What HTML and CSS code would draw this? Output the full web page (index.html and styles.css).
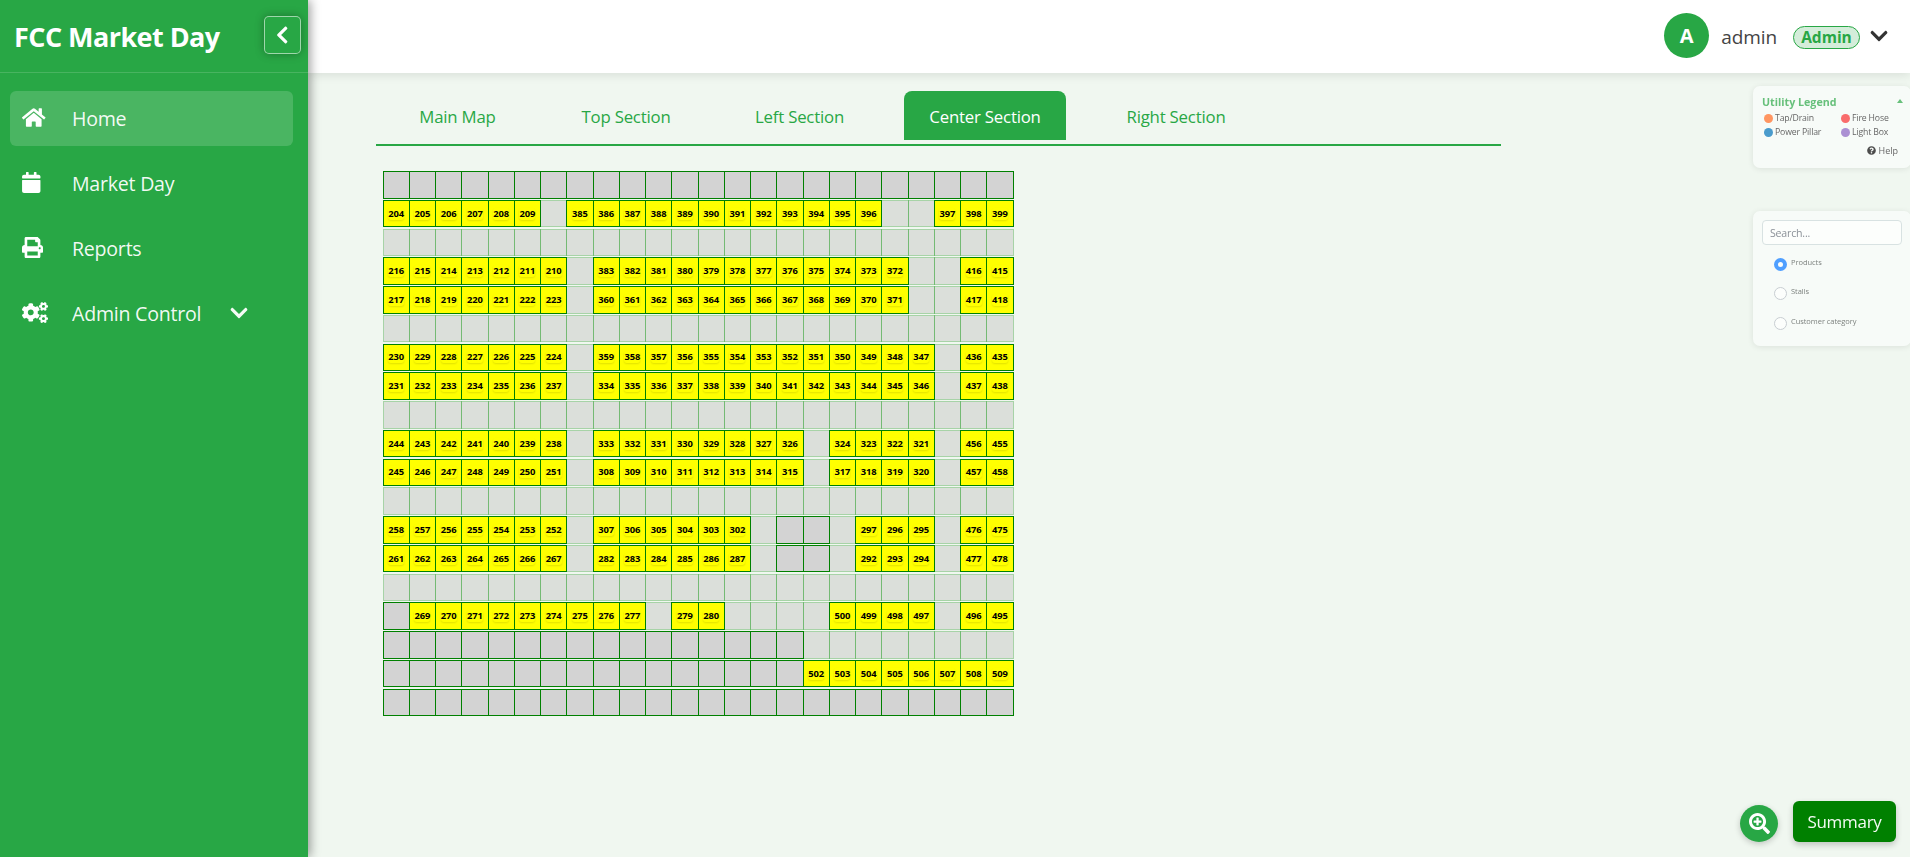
FILE: index.html
```html
<!DOCTYPE html>
<html lang="en">
<head>
<meta charset="utf-8">
<title>FCC Market Day</title>
<link rel="stylesheet" href="styles.css">
</head>
<body>
<svg class="defs" aria-hidden="true">
  <symbol id="down" viewBox="0 0 448 512"><path d="M207.029 381.476L12.686 187.132c-9.373-9.373-9.373-24.569 0-33.941l22.667-22.667c9.357-9.357 24.522-9.375 33.901-.04L224 284.505l154.745-154.021c9.379-9.335 24.544-9.317 33.901.04l22.667 22.667c9.373 9.373 9.373 24.569 0 33.941L240.971 381.476c-9.373 9.372-24.569 9.372-33.942 0z"/></symbol>
  <symbol id="cog-small" viewBox="0 0 640 512"><path fill-rule="evenodd" d="M512.1 191l-8.2 14.3c-3 5.3-9.4 7.5-15.1 5.4-11.8-4.4-22.6-10.7-32.1-18.6-4.6-3.8-5.8-10.5-2.8-15.7l8.2-14.3c-6.9-8-12.3-17.3-15.9-27.4h-16.5c-6 0-11.2-4.3-12.2-10.3-2-12-2.1-24.6 0-37.1 1-6 6.2-10.4 12.2-10.4h16.5c3.6-10.1 9-19.4 15.9-27.4l-8.2-14.3c-3-5.2-1.9-11.9 2.8-15.7 9.5-7.9 20.4-14.2 32.1-18.6 5.7-2.1 12.1.1 15.1 5.4l8.2 14.3c10.5-1.9 21.2-1.9 31.7 0L552 6.3c3-5.3 9.4-7.5 15.1-5.4 11.8 4.4 22.6 10.7 32.1 18.6 4.6 3.8 5.8 10.5 2.8 15.7l-8.2 14.3c6.9 8 12.3 17.3 15.9 27.4h16.5c6 0 11.2 4.3 12.2 10.3 2 12 2.1 24.6 0 37.1-1 6-6.2 10.4-12.2 10.4h-16.5c-3.6 10.1-9 19.4-15.9 27.4l8.2 14.3c3 5.2 1.9 11.9-2.8 15.7-9.5 7.9-20.4 14.2-32.1 18.6-5.7 2.1-12.1-.1-15.1-5.4l-8.2-14.3c-10.4 1.9-21.2 1.9-31.7 0zm-10.5-58.8c38.5 29.6 82.4-14.3 52.8-52.8-38.5-29.7-82.4 14.3-52.8 52.8z"/></symbol>
</svg>

<div class="shell">
  <aside class="sidebar">
    <div class="brand">
      <h1 class="brand-name">FCC Market Day</h1>
      <button class="collapse" aria-label="Collapse"><svg viewBox="0 0 320 512"><path d="M34.52 239.03L228.87 44.69c9.37-9.37 24.57-9.37 33.94 0l22.67 22.67c9.36 9.36 9.37 24.52.04 33.9L131.49 256l154.02 154.75c9.34 9.38 9.32 24.54-.04 33.9l-22.67 22.67c-9.37 9.37-24.57 9.37-33.94 0L34.52 272.97c-9.37-9.37-9.37-24.57 0-33.94z"/></svg></button>
    </div>
    <nav class="menu">
      <a class="menu-item is-active"><span class="menu-icon"><svg class="w-home" viewBox="0 0 576 512"><path d="M280.37 148.26L96 300.11V464a16 16 0 0 0 16 16l112.06-.29a16 16 0 0 0 15.92-16V368a16 16 0 0 1 16-16h64a16 16 0 0 1 16 16v95.64a16 16 0 0 0 16 16.05L464 480a16 16 0 0 0 16-16V300L295.67 148.26a12.19 12.19 0 0 0-15.3 0zM571.6 251.47L488 182.56V44.05a12 12 0 0 0-12-12h-56a12 12 0 0 0-12 12v72.61L318.47 43a48 48 0 0 0-61 0L4.34 251.47a12 12 0 0 0-1.6 16.9l25.5 31A12 12 0 0 0 45.15 301l235.22-193.74a12.19 12.19 0 0 1 15.3 0L530.9 301a12 12 0 0 0 16.9-1.6l25.5-31a12 12 0 0 0-1.7-16.93z"/></svg></span><span>Home</span></a>
      <a class="menu-item"><span class="menu-icon"><svg class="w-cal" viewBox="0 0 448 512"><path d="M12 192h424c6.6 0 12 5.4 12 12v260c0 26.5-21.5 48-48 48H48c-26.5 0-48-21.5-48-48V204c0-6.6 5.4-12 12-12zm436-44v-36c0-26.5-21.5-48-48-48h-48V12c0-6.6-5.4-12-12-12h-40c-6.6 0-12 5.4-12 12v52H160V12c0-6.6-5.4-12-12-12h-40c-6.6 0-12 5.4-12 12v52H48C21.5 64 0 85.5 0 112v36c0 6.6 5.4 12 12 12h424c6.6 0 12-5.4 12-12z"/></svg></span><span>Market Day</span></a>
      <a class="menu-item"><span class="menu-icon"><svg class="w-print" viewBox="0 0 512 512"><path d="M448 192V77.25c0-8.49-3.37-16.62-9.37-22.63L393.37 9.37c-6-6-14.14-9.37-22.63-9.37H96C78.33 0 64 14.33 64 32v160c-35.35 0-64 28.65-64 64v112c0 8.84 7.16 16 16 16h48v96c0 17.67 14.33 32 32 32h320c17.67 0 32-14.33 32-32v-96h48c8.84 0 16-7.16 16-16V256c0-35.35-28.65-64-64-64zm-64 256H128v-96h256v96zm0-224H128V64h192v48c0 8.84 7.16 16 16 16h48v96zm48 72c-13.25 0-24-10.75-24-24 0-13.26 10.75-24 24-24s24 10.74 24 24c0 13.25-10.75 24-24 24z"/></svg></span><span>Reports</span></a>
      <a class="menu-item"><span class="menu-icon"><svg class="w-cogs" viewBox="0 0 640 512"><use href="#cog-small" width="640" height="512"/><use href="#cog-small" y="301" width="640" height="512"/><path fill-rule="evenodd" d="M386.3 286.1l33.7 16.8c10.1 5.8 14.5 18.1 10.5 29.1-8.9 24.2-26.4 46.4-42.6 65.8-7.4 8.9-20.2 11.1-30.3 5.3l-29.1-16.8c-16 13.7-34.6 24.6-54.9 31.7v33.6c0 11.6-8.3 21.6-19.7 23.6-24.6 4.2-50.4 4.4-75.9 0-11.5-2-20-11.9-20-23.6V418c-20.3-7.2-38.9-18-54.9-31.7L74 403c-10 5.8-22.9 3.6-30.3-5.3-16.2-19.4-33.3-41.6-42.2-65.7-4-10.9.4-23.2 10.5-29.1l33.3-16.8c-3.9-20.9-3.9-42.4 0-63.4L12 205.8c-10.1-5.8-14.6-18.1-10.5-29 8.9-24.2 26-46.4 42.2-65.8 7.4-8.9 20.2-11.1 30.3-5.3l29.1 16.8c16-13.7 34.6-24.6 54.9-31.7V57.1c0-11.5 8.2-21.5 19.6-23.5 24.6-4.2 50.5-4.4 76-.1 11.5 2 20 11.9 20 23.6v33.6c20.3 7.2 38.9 18 54.9 31.7l29.1-16.8c10-5.8 22.9-3.6 30.3 5.3 16.2 19.4 33.2 41.6 42.1 65.8 4 10.9.1 23.2-10 29.1l-33.7 16.8c3.9 21 3.9 42.5 0 63.5zm-117.6 21.1c59.2-77-28.7-164.9-105.7-105.7-59.2 77 28.7 164.9 105.7 105.7z"/></svg></span><span>Admin Control</span><svg class="menu-caret" viewBox="0 0 448 512"><use href="#down"/></svg></a>
    </nav>
  </aside>

  <div class="page">
    <header class="topbar">
      <span class="avatar">A</span>
      <span class="user">admin</span>
      <span class="role">Admin</span>
      <svg class="user-caret" viewBox="0 0 448 512"><use href="#down"/></svg>
    </header>
    <main class="content">
      <nav class="tabs">
        <a class="tab t-main">Main Map</a>
        <a class="tab t-top">Top Section</a>
        <a class="tab t-left">Left Section</a>
        <a class="tab t-center is-current">Center Section</a>
        <a class="tab t-right">Right Section</a>
      </nav>
      <div class="map" id="map"></div>
    </main>
  </div>
</div>

<section class="panel legend">
  <div class="legend-head"><span>Utility Legend</span><i class="up"></i></div>
  <div class="legend-grid">
    <span class="key"><i class="dot orange"></i>Tap/Drain</span>
    <span class="key"><i class="dot red"></i>Fire Hose</span>
    <span class="key"><i class="dot blue"></i>Power Pillar</span>
    <span class="key"><i class="dot purple"></i>Light Box</span>
  </div>
  <div class="help"><svg viewBox="0 0 512 512"><path d="M504 256c0 136.997-111.043 248-248 248S8 392.997 8 256C8 119.083 119.043 8 256 8s248 111.083 248 248zM262.655 90c-54.497 0-89.255 22.957-116.549 63.758-3.536 5.286-2.353 12.415 2.715 16.258l34.699 26.31c5.205 3.947 12.621 3.008 16.665-2.122 17.864-22.658 30.113-35.797 57.303-35.797 20.429 0 45.698 13.148 45.698 32.958 0 14.976-12.363 22.667-32.534 33.976C247.128 238.528 216 254.941 216 296v4c0 6.627 5.373 12 12 12h56c6.627 0 12-5.373 12-12v-1.333c0-28.462 83.186-29.647 83.186-106.667 0-58.002-60.165-102-116.531-102zM256 338c-25.365 0-46 20.635-46 46 0 25.364 20.635 46 46 46s46-20.636 46-46c0-25.365-20.635-46-46-46z"/></svg><span>Help</span></div>
</section>

<section class="panel search">
  <div class="search-box">Search...</div>
  <div class="options">
    <label class="option"><i class="radio is-on"></i><span>Products</span></label>
    <label class="option"><i class="radio"></i><span>Stalls</span></label>
    <label class="option"><i class="radio"></i><span>Customer category</span></label>
  </div>
</section>

<div class="actions">
  <button class="zoom" aria-label="Zoom"><svg viewBox="0 0 512 512"><path d="M304 192v32c0 6.6-5.4 12-12 12h-56v56c0 6.6-5.4 12-12 12h-32c-6.6 0-12-5.4-12-12v-56h-56c-6.6 0-12-5.4-12-12v-32c0-6.6 5.4-12 12-12h56v-56c0-6.6 5.4-12 12-12h32c6.6 0 12 5.4 12 12v56h56c6.6 0 12 5.4 12 12zm201 284.7L476.7 505c-9.4 9.4-24.6 9.4-33.9 0L343 405.3c-4.5-4.5-7-10.6-7-17V372c-35.3 27.6-79.7 44-128 44C93.1 416 0 322.9 0 208S93.1 0 208 0s208 93.1 208 208c0 48.3-16.4 92.7-44 128h16.3c6.4 0 12.5 2.5 17 7l99.7 99.7c9.3 9.4 9.3 24.6 0 34zM344 208c0-75.2-60.8-136-136-136S72 132.8 72 208s60.8 136 136 136 136-60.8 136-136z"/></svg></button>
  <button class="summary">Summary</button>
</div>
<script src="map.js"></script>
</body>
</html>
```

FILE: styles.css
```css
* { box-sizing: border-box; }
body { margin: 0; background: #f0f7f0; font-family: "Open Sans", "Noto Sans", sans-serif; overflow: hidden; }
button { font: inherit; padding: 0; border: 0; }
.defs { display: none; }
svg { fill: currentColor; flex: none; }

.shell { display: flex; height: 857px; }
.sidebar { position: relative; z-index: 2; flex: none; width: 308px; background: #28a745; color: #fff; box-shadow: 2px 0 10px rgba(0,0,0,.4); }
.brand { display: flex; align-items: center; justify-content: space-between; height: 73px; padding: 0 7px 2px 14px; border-bottom: 1px solid rgba(255,255,255,.15); }
.brand-name { margin: 2px 0 0; font-size: 27px; font-weight: 700; letter-spacing: -.55px; white-space: nowrap; }
.collapse { display: flex; align-items: center; justify-content: center; width: 37px; height: 38px; color: #fff; background: #28a745; border: 1px solid rgba(255,255,255,.55); border-radius: 5px; box-shadow: 0 0 10px rgba(0,0,0,.3); }
.collapse svg { width: 12.5px; height: 20px; }
.menu { display: flex; flex-direction: column; gap: 10px; padding: 18px 15px 0 10px; }
.menu-item { display: flex; align-items: center; height: 55px; padding: 0 12px; border-radius: 6px; font-size: 19.6px; letter-spacing: -.25px; color: rgba(255,255,255,.95); white-space: nowrap; }
.menu-item.is-active { background: rgba(255,255,255,.16); }
.menu-icon { display: flex; flex: none; width: 50px; padding-bottom: 3px; color: #fff; }
.w-home { width: 23.5px; height: 21px; }
.w-cal { width: 18.5px; height: 21px; }
.w-print { width: 21px; height: 21px; }
.w-cogs { width: 26px; height: 21px; }
.menu-caret { width: 18px; height: 20px; margin: 0 0 2px 29px; }

.page { flex: 1; min-width: 0; }
.topbar { position: relative; z-index: 1; display: flex; align-items: center; justify-content: flex-end; height: 73px; padding: 0 22px 2px 0; background: #fff; box-shadow: 0 2px 10px rgba(0,0,0,.1); }
.avatar { display: flex; align-items: center; justify-content: center; width: 45px; height: 45px; border-radius: 50%; background: #28a745; color: #fff; font-size: 20px; font-weight: 700; }
.user { margin: 2px 0 0 12px; color: #444; font-size: 19px; letter-spacing: -.1px; }
.role { display: flex; align-items: center; justify-content: center; width: 67px; height: 23px; margin: 3px 10px 0 16px; border: 1px solid #28a745; border-radius: 12px; background: #d4edda; color: #28a745; font-size: 15.5px; font-weight: 700; }
.user-caret { width: 18px; height: 20px; color: #333; }

.content { padding: 18px 0 0 68px; }
.tabs { display: flex; gap: 35px; width: 1125px; height: 55px; padding-left: 17px; border-bottom: 2px solid #28a745; color: #28a745; }
.tab { display: flex; align-items: center; justify-content: center; height: 49px; padding-top: 2px; border-radius: 8px 8px 0 0; font-size: 16.8px; letter-spacing: -.2px; white-space: nowrap; }
.t-main { width: 129px; }
.t-top { width: 138px; }
.t-left { width: 139px; }
.t-center { width: 162px; }
.t-right { width: 150px; }
.tab.is-current { background: #28a745; color: #fff; }

.map { display: grid; grid-template-columns: repeat(24, 26.25px); grid-template-rows: repeat(19, 28.75px); padding: 25px 0 0 6.55px; }
.stall { display: flex; align-items: center; justify-content: center; width: 27.25px; height: 27.6px; border: 1px solid #008000; background: #d3d3d3; }
.stall.path { background: #dbdfda padding-box; border-color: rgba(0,128,0,.3); }
.stall.taken { background: #ff0; }
.number { color: #000; font-size: 9.4px; line-height: 12px; font-weight: 700; border-radius: 3px; box-shadow: 0 1px 2px rgba(0,0,0,.12); }

.panel { position: fixed; z-index: 3; left: 1753px; width: 158px; border-radius: 7px; background: #f7fbf8; box-shadow: 0 1px 6px rgba(0,0,0,.09); }
.legend { top: 86px; height: 82px; padding: 9px 8px 0 9px; color: #666; }
.legend-head { display: flex; justify-content: space-between; color: #67c07b; font-size: 10.7px; line-height: 14px; font-weight: 700; }
.up { width: 0; height: 0; margin: 4px 0 0; border: 3.5px solid transparent; border-top: 0; border-bottom: 4px solid #67c07b; }
.legend-grid { display: grid; grid-template-columns: 77px 1fr; grid-auto-rows: 14px; margin: 2px 0 0 2px; }
.key { display: flex; align-items: center; gap: 2px; font-size: 8.7px; letter-spacing: -.15px; white-space: nowrap; }
.dot { flex: none; width: 9px; height: 9px; border-radius: 50%; }
.orange { background: #ff9662; }
.red { background: #f96c6c; }
.blue { background: #4a9bcc; }
.purple { background: #ab90d3; }
.help { display: flex; align-items: center; justify-content: flex-end; gap: 3px; height: 18px; margin-top: 1px; padding: 3px 5px 0 0; font-size: 9px; }
.help svg { width: 9px; height: 9px; color: #4c4c4c; }
.search { top: 211px; height: 135px; padding: 9px 9px 0 9px; }
.search-box { display: flex; align-items: center; height: 25px; padding: 1px 7px 0; border: 1px solid #d8e2e2; border-radius: 4px; background: #fcfefc; color: #8b9198; font-size: 10.6px; letter-spacing: -.2px; }
.options { display: flex; flex-direction: column; gap: 16px; padding: 13px 0 0 12px; }
.option { display: flex; gap: 4px; height: 13.3px; color: #7d827f; font-size: 7.5px; letter-spacing: -.05px; line-height: 9px; white-space: nowrap; }
.radio { flex: none; width: 13px; height: 13px; border: 1px solid #c8ced2; border-radius: 50%; background: #fcfefc; }
.radio.is-on { border: 4px solid #4f9fff; }
.actions { position: fixed; z-index: 3; right: 14px; bottom: 15px; display: flex; align-items: flex-end; gap: 15px; }
.zoom { display: flex; align-items: center; justify-content: center; width: 38px; height: 37px; border-radius: 50%; background: #28a745; color: #fff; box-shadow: 0 2px 6px rgba(0,0,0,.2); }
.zoom svg { width: 21px; height: 21px; }
.summary { width: 103px; height: 41px; padding-bottom: 1px; border-radius: 6px; background: #008000; color: #f4faf4; font-size: 17px; letter-spacing: -.3px; box-shadow: 0 3px 6px rgba(0,0,0,.2); }
```

FILE: map.js
```js
// Each row reads left to right: "a-b" is a run of stall numbers,
// "gN" is N unassigned plots, "pN" is N walkway plots.
const rows = [
  "g24",
  "204-209 p1 385-396 p2 397-399",
  "p24",
  "216-210 p1 383-372 p2 416-415",
  "217-223 p1 360-371 p2 417-418",
  "p24",
  "230-224 p1 359-347 p1 436-435",
  "231-237 p1 334-346 p1 437-438",
  "p24",
  "244-238 p1 333-326 p1 324-321 p1 456-455",
  "245-251 p1 308-315 p1 317-320 p1 457-458",
  "p24",
  "258-252 p1 307-302 p1 g2 p1 297-295 p1 476-475",
  "261-267 p1 282-287 p1 g2 p1 292-294 p1 477-478",
  "p24",
  "g1 269-277 p1 279-280 p4 500-497 p1 496-495",
  "g16 p8",
  "g16 502-509",
  "g24"
];
const map = document.getElementById("map");

function addStall(kind, number) {
  const cell = document.createElement("div");
  cell.className = "stall " + kind;
  if (number) {
    const label = document.createElement("span");
    label.className = "number";
    label.textContent = number;
    cell.append(label);
  }
  map.append(cell);
}

for (const row of rows) {
  for (const part of row.split(" ")) {
    if (/^[gp]/.test(part)) {
      for (let i = 0; i < +part.slice(1); i++) addStall(part[0] === "p" ? "path" : "plot");
    } else {
      const [from, to] = part.split("-").map(Number);
      const step = from < to ? 1 : -1;
      for (let n = from; n !== to + step; n += step) addStall("taken", n);
    }
  }
}
```
